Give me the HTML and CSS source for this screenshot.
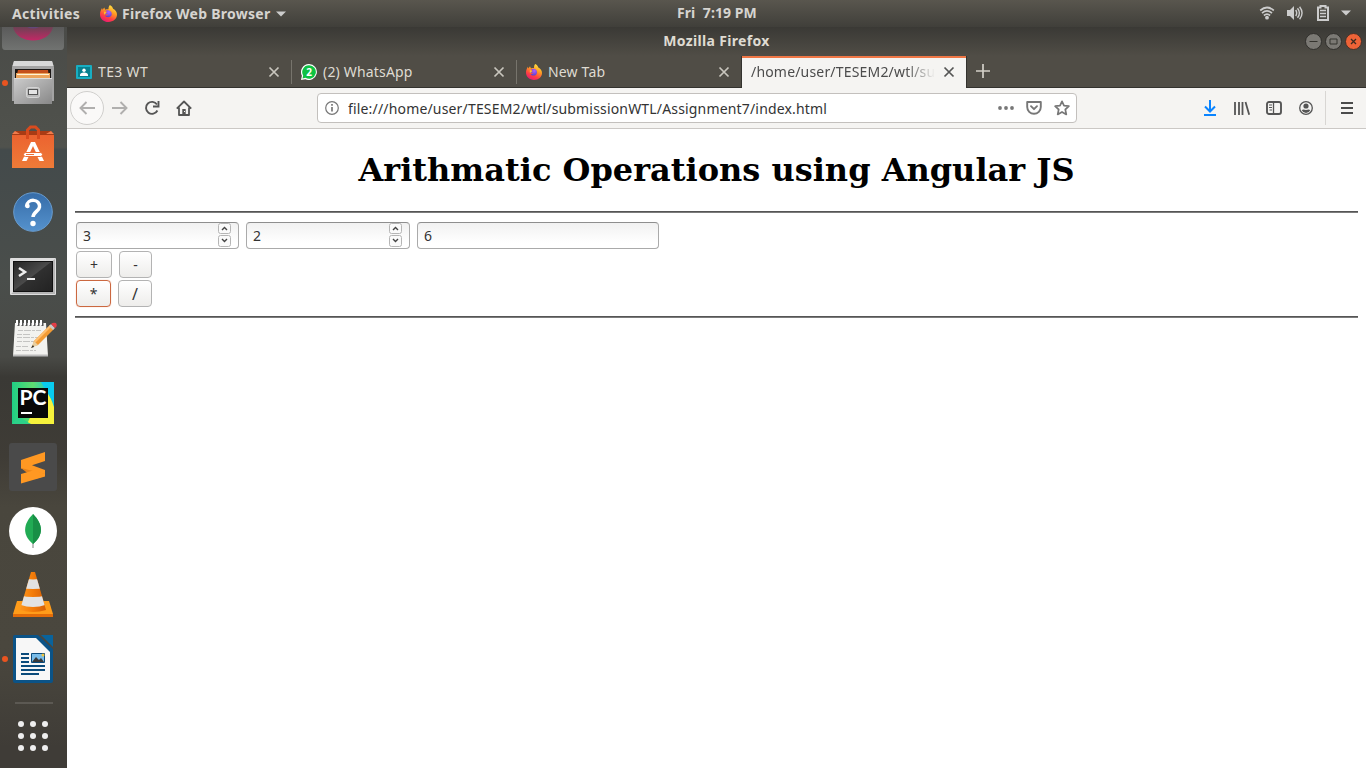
FILE: index.html
```
<!DOCTYPE html>
<html lang="en">
<head>
<meta charset="utf-8">
<title>Mozilla Firefox</title>
<link rel="stylesheet" href="styles.css">
</head>
<body>
<svg class="defs" width="0" height="0" aria-hidden="true">
  <defs>
    <linearGradient id="fire" x1=".8" y1="0" x2=".3" y2="1"><stop offset="0" stop-color="#fff04a"/><stop offset=".4" stop-color="#ff9a22"/><stop offset=".72" stop-color="#ff4043"/><stop offset="1" stop-color="#e81a73"/></linearGradient>
    <radialGradient id="globe" cx=".6" cy=".3" r=".8"><stop offset="0" stop-color="#b45cff"/><stop offset="1" stop-color="#4840c8"/></radialGradient>
    <symbol id="firefox" viewBox="0 0 16 16">
      <path fill="url(#fire)" d="M9.3 0c1.9 1 2.8 2.500 3 3.600C14.600 4.700 16 6.900 16 9c0 4-3.500 7-8 7S0 13 0 8.600C0 6.500.8 4.600 1.900 2.800l.5 1.700L4 2.300l1 2.100c1-.4 2-.5 3-.3C7.900 2.500 8.300 1 9.300 0z"/>
      <path fill="url(#globe)" d="M5.200 5.400c1.500-1 4-.6 5.200.9 1 1.500.8 3.600-.6 4.600-1.700 1.200-4.400.7-5.200-1.200 1.100.5 2.200.2 2.900-.6-.9-.4-2-.4-3.100-.3-.2-1 .8-1.300 2-1.600 0-.8-.5-1.300-1.200-1.800z"/>
      <path fill="#ffbd2e" d="M4 6c.8.300 1.500.8 2.200 1.200L5 8.200c-.6.300-.8.8-.7 1.200-.6-1-.7-2.300-.3-3.400z"/>
    </symbol>
    <symbol id="close" viewBox="0 0 12 12"><path d="M1.500 1.500l9 9m0-9l-9 9" fill="none" stroke="currentColor" stroke-width="1.700"/></symbol>
    <symbol id="spin" viewBox="0 0 13 25">
      <rect x=".5" y=".5" width="12" height="10" rx="2" fill="#fafafa" stroke="#b5b5b5"/>
      <path d="M4 7l2.500-2.500L9 7" fill="none" stroke="#444" stroke-width="1.400"/>
      <rect x=".5" y="12.500" width="12" height="11" rx="2" fill="#fafafa" stroke="#b5b5b5"/>
      <path d="M4 16l2.500 2.500L9 16" fill="none" stroke="#444" stroke-width="1.400"/>
    </symbol>
  </defs>
</svg>

<header class="topbar">
  <div class="topbar-left">
    <span class="activities">Activities</span>
    <svg class="app-icon" width="17" height="17"><use href="#firefox"/></svg>
    <span class="app-name">Firefox Web Browser</span>
    <svg width="10" height="6" viewBox="0 0 10 6"><path d="M0 .5h10L5 5.500z" fill="#ccc"/></svg>
  </div>
  <div class="clock">Fri&nbsp; 7:19 PM</div>
  <div class="topbar-right">
    <svg width="16" height="14" viewBox="0 0 16 14" fill="none" stroke="#ccc" stroke-width="1.700"><path d="M1.200 4.500Q8-1.500 14.800 4.500M3 7.100q5-4.300 10 0M4.900 9.500q3.100-2.700 6.200 0"/><circle cx="8" cy="11.700" r="1.900" fill="#ccc" stroke="none"/></svg>
    <svg class="sound" width="16" height="14" viewBox="0 0 16 14"><path d="M0 4h3l4-4v14L3 10H0z" fill="#ccc"/><path d="M8.700 4q2 3 0 6M10.500 2.200q3.800 4.800 0 9.600M12.600.7q4.900 6.300 0 12.600" fill="none" stroke="#ccc" stroke-width="1.400"/></svg>
    <svg width="12" height="16" viewBox="0 0 12 16"><path d="M1 2.500h2.500V1h5v1.500H11V15H1z" fill="none" stroke="#ccc" stroke-width="2"/><path d="M3 5.500h6M3 8.500h6M3 11.500h6" stroke="#ccc" stroke-width="1.400"/></svg>
    <svg width="10" height="6" viewBox="0 0 10 6"><path d="M0 .5h10L5 5.500z" fill="#ccc"/></svg>
  </div>
</header>

<div class="desktop">
  <nav class="dock">
    <div class="dock-peek">
      <svg width="67" height="24" viewBox="0 0 67 24"><defs><linearGradient id="pk" x1="0" y1="0" x2="0" y2="1"><stop offset="0" stop-color="#5a5a5a"/><stop offset="1" stop-color="#717371"/></linearGradient><linearGradient id="pm" x1="0" y1="0" x2="0" y2="1"><stop offset="0" stop-color="#6c4254"/><stop offset="1" stop-color="#c32866"/></linearGradient></defs>
        <path d="M2 0h62v19q0 4-3 4H5q-3 0-3-4z" fill="url(#pk)"/><path d="M13 0h40C49 18 17 18 13 0z" fill="url(#pm)"/><path d="M27 0q6 3 12 0z" fill="#634779"/></svg>
    </div>
    <div class="dock-item">
      <svg width="67" height="64" viewBox="0 0 67 64"><defs><linearGradient id="cab" x1="0" y1="0" x2="1" y2="1"><stop offset="0" stop-color="#ccc"/><stop offset=".5" stop-color="#aaa"/><stop offset="1" stop-color="#888"/></linearGradient></defs>
        <circle cx="5" cy="32" r="3" fill="#e95420"/>
        <path d="M14 10h38l2 6v34H12V16z" fill="#a3a3a3"/><path d="M14 10h38l1.500 5h-41z" fill="#d8d8d8"/>
        <path d="M15 18h36v9H15z" fill="#1b1715"/><path d="M18 19h30l1 8H16z" fill="#c5501c"/><path d="M16 22h34v5H16z" fill="#eba45c"/><path d="M17 23.500h32" stroke="#fff3d8"/>
        <path d="M14 27h38v26H14z" fill="url(#cab)"/><path d="M14 27.500h38" stroke="#ddd"/><rect x="26.500" y="36.500" width="13" height="10" rx="2" fill="#bbb" stroke="#d5d5d5"/><rect x="28.500" y="38.500" width="9" height="5" fill="#e4e4e4" stroke="#555"/></svg>
    </div>
    <div class="dock-item">
      <svg width="67" height="64" viewBox="0 0 67 64"><defs><linearGradient id="bag" x1="0" y1="0" x2="0" y2="1"><stop offset="0" stop-color="#ec6330"/><stop offset="1" stop-color="#ee7b38"/></linearGradient></defs>
        <path d="M12 20l3-4h36l3 4z" fill="#a93b14"/><path d="M12 19l3-3 5 3zM54 19l-3-3-5 3z" fill="#f07b4c"/><path d="M12 20h42v33H12z" fill="url(#bag)"/><path d="M27.500 24v-9l3-3h5l3 3v9" fill="none" stroke="#d84b1e" stroke-width="3"/>
        <path d="M31 27h4l9 19h-4.500l-2-4h-9l-2 4H22z" fill="#fff"/><path d="M33 31l-3.500 7.500h7z" fill="#ec6b33"/><rect x="23.500" y="37.500" width="19" height="4" rx="2" fill="#fff" stroke="#ed6f34"/><path d="M26 39.500h8" stroke="#ed6f34"/></svg>
    </div>
    <div class="dock-item">
      <svg width="67" height="64" viewBox="0 0 67 64"><defs><linearGradient id="hlp" x1="0" y1="0" x2="0" y2="1"><stop offset="0" stop-color="#366ca8"/><stop offset="1" stop-color="#5592cd"/></linearGradient></defs>
        <circle cx="33" cy="33" r="19.300" fill="url(#hlp)" stroke="#699cce"/><path d="M26.500 27.500C27 19 40.500 19.500 39.500 28c-.4 4-6.300 5-6.500 10" fill="none" stroke="#fff" stroke-width="3.500"/><circle cx="27.500" cy="27" r="2.300" fill="#fff"/><circle cx="33" cy="44.500" r="2.700" fill="#fff"/></svg>
    </div>
    <div class="dock-item">
      <svg width="67" height="64" viewBox="0 0 67 64"><defs><linearGradient id="trm" x1="0" y1="0" x2="1" y2="1"><stop offset="0" stop-color="#252525"/><stop offset=".48" stop-color="#4a4a4a"/><stop offset=".5" stop-color="#303030"/><stop offset="1" stop-color="#222"/></linearGradient></defs>
        <rect x="10" y="15" width="46" height="37" rx="1" fill="#dedede"/><path d="M11 51h44V16z" fill="#b5b5b5"/><rect x="13.500" y="18.500" width="39" height="30" fill="url(#trm)" stroke="#111"/><path d="M19 25l6 4-6 4" fill="none" stroke="#eee" stroke-width="2.500"/><path d="M27 36h8" stroke="#eee" stroke-width="2"/></svg>
    </div>
    <div class="dock-item">
      <svg width="67" height="64" viewBox="0 0 67 64"><path d="M15 16h31l2 33H13z" fill="#f2f2ef"/><path d="M13 48.500h35" stroke="#bbb" stroke-width="2"/><path d="M18.500 19v-4M22.500 19v-4M26.500 19v-4M30.500 19v-4M34.500 19v-4M38.500 19v-4M42.500 19v-4" stroke="#555" stroke-width="2"/><path d="M17 18v-5M21 18v-5M25 18v-5M29 18v-5M33 18v-5M37 18v-5M41 18v-5" stroke="#fff" stroke-width="2"/>
        <g stroke="#c4c4c2" stroke-dasharray="5 1 7 1 3 1"><path d="M18 23.500h23M17 27.500h14M17 30.500h22M17 34.500h20M16 39.500h12M16 43.500h20"/></g>
        <path d="M34 34L50 18l4 4-16 16-6 2z" fill="#f29b35"/><path d="M34 34L50 18l1.500 1.500-16 16z" fill="#ffc071"/><path d="M34 34l4 4-7 3z" fill="#e9cfa0"/><path d="M33 38l-2 3 3-1z" fill="#222"/><path d="M49 19l2-2 4 4-2 2z" fill="#c9c9c9"/><path d="M51 17q2-2 5-1 2 3-1 5z" fill="#e33d46"/></svg>
    </div>
    <div class="dock-item">
      <svg width="67" height="64" viewBox="0 0 67 64"><defs><linearGradient id="pyc" x1="0" y1="0" x2="1" y2="0"><stop offset="0" stop-color="#1fcf85"/><stop offset=".5" stop-color="#5fdc70"/><stop offset="1" stop-color="#09c3e5"/></linearGradient></defs>
        <path d="M12 11h42v42H12z" fill="url(#pyc)"/><path d="M27 53L46 14l8 22v17z" fill="#f6f23c"/><path d="M12 53l7-7 12 7z" fill="#2cd189"/><path d="M41 11h13v22z" fill="#08cbef"/><path d="M18 17h30v30H18z" fill="#080808"/><path d="M21 42h11" stroke="#fff" stroke-width="2"/><text class="pc" x="19.500" y="34" textLength="27" lengthAdjust="spacingAndGlyphs">PC</text></svg>
    </div>
    <div class="dock-item">
      <svg width="67" height="64" viewBox="0 0 67 64"><rect x="9" y="8" width="48" height="48" rx="3" fill="#4a4a4a"/><path d="M21 25l24-8v9l-13 4.300L45 35v6L21 33.500z" fill="#ff9822"/><path d="M21 33l24 6v2l-10 3z" fill="#e7821a"/><path d="M21 39l13-3.800L45 39v2.500L21 48.500z" fill="#ff9822"/></svg>
    </div>
    <div class="dock-item">
      <svg width="67" height="64" viewBox="0 0 67 64"><circle cx="33" cy="32" r="24" fill="#fff"/><path d="M33 42v7" stroke="#aaa" stroke-width="1.500"/><path d="M33 15c10 10 11 21 0 30-11-9-10-20 0-30z" fill="#21ab54"/><path d="M33 15c10 10 11 21 0 30z" fill="#188f46"/></svg>
    </div>
    <div class="dock-item">
      <svg width="67" height="64" viewBox="0 0 67 64"><defs><linearGradient id="vlc" x1="0" y1="0" x2="1" y2="0"><stop offset="0" stop-color="#ff9b21"/><stop offset=".5" stop-color="#f37b08"/><stop offset="1" stop-color="#cf5907"/></linearGradient><clipPath id="cone"><path d="M31 9h4l11 38q-13 4-26 0z"/></clipPath></defs>
        <path d="M17 38h32l4 13v3H13v-3z" fill="#ff9c1a"/><path d="M13 51h40v3H13z" fill="#e36c09"/><g clip-path="url(#cone)"><path d="M18 8h30v42H18z" fill="url(#vlc)"/><path d="M18 15q15 3 30 0v9q-15 4-30 0zM18 32q15 4 30 0v9q-15 6-30 0z" fill="#e2e2e2"/></g></svg>
    </div>
    <div class="dock-item">
      <svg width="67" height="64" viewBox="0 0 67 64"><circle cx="5" cy="32" r="3" fill="#e95420"/><path d="M15 8h23l15 14v32q0 2-2 2H15q-2 0-2-2V10q0-2 2-2z" fill="#0b5387"/><path d="M16 11h20l14 14v28H16z" fill="#f7f7f7"/><path d="M41 8h12v12z" fill="#09639c"/><path d="M21 27h8M21 31h8M21 35h8M21 39h24M21 43h24M21 47h18" stroke="#0b4b7b" stroke-width="2"/><path d="M31.500 26.500h13v9h-13z" fill="#79bce8" stroke="#0b4b7b"/><path d="M32 35l4-5 3 3 2-2 3 4z" fill="#393939"/><circle cx="43" cy="28" r="1.500" fill="#f3c63c"/></svg>
    </div>
    <div class="dock-sep"></div>
    <div class="apps"><i></i><i></i><i></i><i></i><i></i><i></i><i></i><i></i><i></i></div>
  </nav>

  <main class="window">
    <div class="titlebar">
      <span class="title">Mozilla Firefox</span>
      <div class="controls">
        <svg width="17" height="17" viewBox="0 0 17 17"><circle cx="8.500" cy="8.500" r="8" fill="#7b7974" stroke="#302f2c"/><path d="M4.500 8.500h8" stroke="#35342f"/></svg>
        <svg width="17" height="17" viewBox="0 0 17 17"><circle cx="8.500" cy="8.500" r="8" fill="#7b7974" stroke="#302f2c"/><path d="M5 6h7v5H5z" fill="none" stroke="#35342f"/></svg>
        <svg width="17" height="17" viewBox="0 0 17 17"><circle cx="8.500" cy="8.500" r="8" fill="#ee6337" stroke="#453129"/><path d="M6 6l5 5m0-5l-5 5" stroke="#3b2a20" stroke-width="1.300"/></svg>
      </div>
    </div>

    <div class="tabs">
      <div class="tab">
        <svg width="16" height="14" viewBox="0 0 16 14"><rect width="16" height="14" rx="1" fill="#18aec2"/><rect x="2" y="2" width="12" height="10" fill="#08808f"/><circle cx="8" cy="5.200" r="1.700" fill="#fff"/><path d="M4 10q0-2.500 4-2.500t4 2.500v1H4z" fill="#fff"/></svg>
        <span class="label t1">TE3 WT</span><svg class="x" width="12" height="12"><use href="#close"/></svg>
      </div>
      <div class="tab">
        <svg width="16" height="16" viewBox="0 0 16 16"><path d="M8 0a8 8 0 1 1-3.600 15.200L0 16l.9-4.200A8 8 0 0 1 8 0z" fill="#fff"/><path d="M8 1.200a6.800 6.800 0 1 1-3.500 12.600l-3 .7.700-3A6.800 6.800 0 0 1 8 1.200z" fill="#0dc143"/><text class="badge" x="5.200" y="11.800">2</text></svg>
        <span class="label">(2) WhatsApp</span><svg class="x" width="12" height="12"><use href="#close"/></svg>
      </div>
      <div class="tab last">
        <svg width="16" height="16"><use href="#firefox"/></svg>
        <span class="label">New Tab</span><svg class="x" width="12" height="12"><use href="#close"/></svg>
      </div>
      <div class="tab active">
        <span class="label">/home/user/TESEM2/wtl/sub</span><svg class="x" width="12" height="12"><use href="#close"/></svg>
      </div>
      <svg class="plus" width="14" height="14" viewBox="0 0 14 14"><path d="M7 0v14M0 7h14" stroke="#d3d0c8" stroke-width="1.700"/></svg>
    </div>

    <div class="navbar">
      <div class="back"><svg width="16" height="14" viewBox="0 0 16 14"><path d="M16 7H1.500M7.500 1l-6 6 6 6" fill="none" stroke="#b0afae" stroke-width="1.900"/></svg></div>
      <svg class="fwd" width="16" height="14" viewBox="0 0 16 14"><path d="M0 7h14.500M8.500 1l6 6-6 6" fill="none" stroke="#b0afae" stroke-width="1.900"/></svg>
      <svg class="reload" width="16" height="16" viewBox="0 0 16 16"><path d="M13 4.500A6 6 0 1 0 13.400 10.500" fill="none" stroke="#555" stroke-width="1.900"/><path d="M14.500 1v5.500H9" fill="none" stroke="#555" stroke-width="1.900"/></svg>
      <svg class="home" width="16" height="16" viewBox="0 0 16 16"><path d="M.8 8.700L8 1.500l7.200 7.200M3 7.500V15h10V7.500" fill="none" stroke="#555" stroke-width="1.800" stroke-linejoin="round"/><path d="M6.300 15V9h3.400v6z" fill="#555"/><path d="M8 11.500h1" stroke="#fff"/></svg>
      <div class="urlbar">
        <svg width="14" height="14" viewBox="0 0 14 14"><circle cx="7" cy="7" r="6.300" fill="none" stroke="#777" stroke-width="1.200"/><path d="M7 6v4.500M7 3v1.700" stroke="#777" stroke-width="1.700"/></svg>
        <span class="url">file:///home/user/TESEM2/wtl/submissionWTL/Assignment7/index.html</span>
        <svg class="dots" width="16" height="4" viewBox="0 0 16 4" fill="#777"><circle cx="2" cy="2" r="1.900"/><circle cx="8" cy="2" r="1.900"/><circle cx="14" cy="2" r="1.900"/></svg>
        <svg width="16" height="14" viewBox="0 0 16 14" fill="none" stroke="#777" stroke-width="1.900" stroke-linecap="round" stroke-linejoin="round"><path d="M1.200 1h13.600v5a6.800 6.800 0 0 1-13.600 0z"/><path d="M5 5.200l3 3 3-3"/></svg>
        <svg class="star" width="16" height="16" viewBox="0 0 16 16"><path d="M8 1.300l2 4.400 4.900.5-3.600 3.300 1 4.900L8 11.900l-4.300 2.500 1-4.900-3.600-3.300L6 5.700z" fill="none" stroke="#777" stroke-width="1.700" stroke-linejoin="round"/></svg>
      </div>
      <div class="tools">
        <svg width="14" height="16" viewBox="0 0 14 16"><path d="M7 0v11M2 6.500l5 5 5-5M1 15h12" fill="none" stroke="#0a84ff" stroke-width="2"/></svg>
        <svg width="16" height="14" viewBox="0 0 16 14"><path d="M1 1v13M5 1v13M8.500 1v13M11.500 1l3.700 12.700" stroke="#555" stroke-width="1.800"/></svg>
        <svg width="16" height="14" viewBox="0 0 16 14"><rect x="1" y="1" width="14" height="12" rx="2" fill="none" stroke="#555" stroke-width="1.900"/><path d="M7.500 1v12" stroke="#555" stroke-width="1.300"/><path d="M3 4h3M3 6.500h3M3.500 9H6" stroke="#555"/></svg>
        <svg width="14" height="14" viewBox="0 0 14 14"><circle cx="7" cy="7" r="6.300" fill="none" stroke="#555" stroke-width="1.300"/><circle cx="7" cy="5" r="2.600" fill="#555"/><path d="M2.800 9.200C4 8 5.500 9 7 9s3-1 4.200.2Q10 12 7 12T2.800 9.200z" fill="#555"/></svg>
      </div>
      <div class="menu"><svg width="12" height="12" viewBox="0 0 12 12"><path d="M0 1h12M0 6h12M0 11h12" stroke="#4b4b4b" stroke-width="1.900"/></svg></div>
    </div>

    <section class="page">
      <h1>Arithmatic Operations using Angular JS</h1>
      <hr>
      <div class="row fields">
        <div class="field num"><input type="text" value="3"><svg width="13" height="25"><use href="#spin"/></svg></div>
        <div class="field num two"><input type="text" value="2"><svg width="13" height="25"><use href="#spin"/></svg></div>
        <div class="field wide"><input type="text" value="6"></div>
      </div>
      <div class="row ops"><button class="b36">+</button><button class="b33">-</button></div>
      <div class="row ops"><button class="b35 focus">*</button><button class="b34 slash">/</button></div>
      <hr>
    </section>
  </main>
</div>
</body>
</html>
```
FILE: styles.css
```
* { box-sizing: border-box; }
body { margin: 0; width: 1366px; height: 768px; overflow: hidden; font-family: "Noto Sans", "Open Sans", sans-serif; font-size: 14px; background: #fff; }
svg { display: block; flex: none; }
.defs { position: absolute; }

.topbar { height: 27px; display: grid; grid-template-columns: 609px 148px 1fr; align-items: center; background: linear-gradient(#59564e, #403f3a); color: #d6d4d0; font-weight: 700; white-space: nowrap; }
.topbar-left { display: flex; align-items: center; padding-left: 12px; }
.activities { width: 88px; letter-spacing: .3px; padding-bottom: 1px; }
.app-icon { margin-right: 5px; }
.app-name { width: 154px; letter-spacing: .27px; padding-bottom: 1px; }
.clock { width: 80px; margin-left: 68px; letter-spacing: .08px; padding-bottom: 2px; }
.topbar-right { display: flex; align-items: center; justify-content: flex-end; gap: 12px; padding: 0 15px 1px 0; }
.sound { margin-right: 2px; }

.desktop { display: flex; height: 741px; }
.dock { width: 67px; flex: none; display: flex; flex-direction: column; background: linear-gradient(#4a4b48 0, #4e504b 85px, #50524d 120px, #434a4b 123px, #4a4e4b 250px, #494a46 330px, #3a3935 350px, #3f3c36 430px, #49463d 480px, #4a473e 620px, #3f3c37 720px); }
.dock-peek { height: 24px; }
.dock-item { height: 64px; }
.pc { font: 700 20px Lato, sans-serif; fill: #fff; }
.dock-sep { width: 38px; height: 2px; margin: 11px auto 15px; background: #5c5953; }
.apps { display: grid; grid-template-columns: repeat(3, 6px); gap: 6px; margin: 2px 0 0 18px; }
.apps i { width: 6px; height: 6px; border-radius: 50%; background: #eee; }

.window { flex: 1; min-width: 0; }
.titlebar { height: 29px; display: grid; grid-template-columns: 1fr auto 1fr; align-items: center; background: linear-gradient(#3a3935, #504d46); color: #dfdbd2; font-weight: 700; }
.title { grid-column: 2; white-space: nowrap; letter-spacing: .33px; padding-bottom: 2px; }
.controls { display: flex; gap: 3px; justify-self: end; padding: 0 4px 1px 0; }

.tabs { height: 32px; display: flex; background: #504d46; color: #dfdbd2; box-shadow: inset 0 -1px #33322e; }
.tab { width: 225px; display: flex; align-items: center; padding: 0 11px 0 9px; border-right: 1px solid transparent; background: linear-gradient(#77746c, #77746c) right 4px / 1px 24px no-repeat; background-origin: border-box; }
.tab.last { background: none; width: 224px; padding-right: 10px; }
.label { flex: 1; margin: 0 0 0 6px; padding-bottom: 2px; letter-spacing: .18px; white-space: nowrap; overflow: hidden; }
.t1 { letter-spacing: .35px; }
.tab .x { color: #c9c6be; }
.tab.active { width: 226px; background: #f5f4f2; color: #4c4c4c; border: 1px solid #33322e; border-width: 0 1px; box-shadow: inset 0 2px #f07746; padding: 0 11px 0 9px; }
.active .label { margin: 0 8px 0 0; -webkit-mask-image: linear-gradient(90deg, #000 84%, transparent); mask-image: linear-gradient(90deg, #000 84%, transparent); }
.tab.active .x { color: #555; }
.badge { font: 700 10px "Noto Sans", sans-serif; fill: #fff; }
.plus { margin: 8px 0 0 9px; }

.navbar { height: 41px; display: flex; align-items: center; background: #f5f4f2; border-bottom: 1px solid #cbc8c5; }
.back { width: 34px; height: 34px; margin-left: 3px; border: 1px solid #d0cfcd; border-radius: 50%; background: #faf9f8; display: flex; align-items: center; justify-content: center; }
.fwd { margin-left: 8px; }
.reload { margin-left: 16px; }
.home { margin-left: 16px; }
.urlbar { width: 760px; height: 30px; margin-left: 125px; display: flex; align-items: center; padding: 0 6px 0 7px; background: #fff; border: 1px solid #c3c0bd; border-radius: 4px; color: #333; }
.url { flex: 1; margin-left: 9px; letter-spacing: .17px; white-space: nowrap; overflow: hidden; }
.dots { margin-right: 12px; }
.star { margin-left: 12px; }
.tools { display: flex; align-items: center; gap: 17px; margin-left: 126px; }
.tools svg:nth-child(n+3) { margin-left: -1px; }
.tools svg:nth-child(4) { margin-left: 0; }
.menu { height: 34px; margin-left: 12px; padding-left: 15px; border-left: 1px solid #d8d6d3; display: flex; align-items: center; }

.page { padding: 22px 8px 0; }
h1 { margin: 0 0 22px; font: 700 32px/38px "DejaVu Serif", serif; color: #000; text-align: center; white-space: nowrap; }
hr { margin: 0; height: 2px; border: 0; background: linear-gradient(#555 50%, #7b7b7b 50%); }
.row { display: flex; gap: 7px; padding-left: 1px; }
.fields { margin-top: 9px; }
.field { display: flex; height: 27px; border: 1px solid #aaa; border-top-color: #8e8e8e; border-radius: 4px; background: linear-gradient(#f1f1f1, #fff 80%); }
.field input { flex: 1; min-width: 0; padding: 0 0 0 6px; border: 0; outline: 0; background: none; font: 14px "Noto Sans", sans-serif; color: #333; }
.num { width: 163px; padding-right: 7px; }
.two { width: 164px; }
.wide { width: 242px; }
.ops { margin-top: 2px; }
button { height: 27px; padding: 0; border: 1px solid #b3b3b3; border-radius: 4px; background: linear-gradient(#fff, #eeedeb); color: #333; font: 14px "Noto Sans", sans-serif; }
.b36 { width: 36px; }
.b35 { width: 35px; }
.b34 { width: 34px; }
.b33 { width: 33px; }
.focus { border-color: #cb6840; box-shadow: 0 0 1px #ef9a76; }
.slash { font-size: 16px; }
.ops + hr { margin-top: 9px; }
```
